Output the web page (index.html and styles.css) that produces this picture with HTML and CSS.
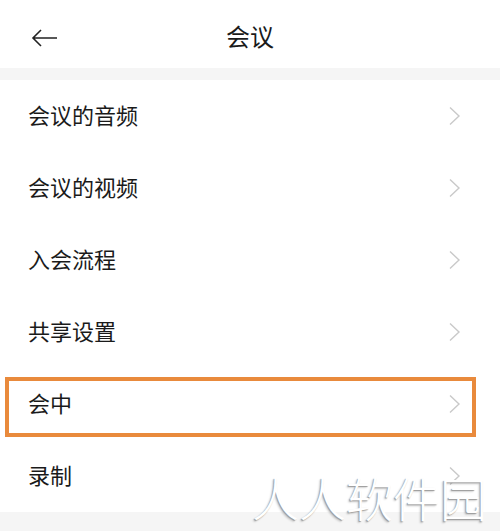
FILE: index.html
```html
<!DOCTYPE html>
<html lang="zh">
<head>
<meta charset="utf-8">
<link rel="stylesheet" href="styles.css">
</head>
<body>
<div class="page">
  <header class="topbar">
    <svg class="back" width="28" height="18" viewBox="0 0 28 18"><path d="M26 9H2M10 1L2 9l8 8" fill="none" stroke="#222" stroke-width="1.6"/></svg>
    <h1 class="title">会议</h1>
  </header>
  <div class="band"></div>
  <ul class="list">
    <li class="row"><span>会议的音频</span><svg class="chev" width="14" height="20" viewBox="0 0 14 20"><path d="M2 1.5l9 8.5-9 8.5" fill="none" stroke="#c9c9c9" stroke-width="1.4"/></svg></li>
    <li class="row"><span>会议的视频</span><svg class="chev" width="14" height="20" viewBox="0 0 14 20"><path d="M2 1.5l9 8.5-9 8.5" fill="none" stroke="#c9c9c9" stroke-width="1.4"/></svg></li>
    <li class="row"><span>入会流程</span><svg class="chev" width="14" height="20" viewBox="0 0 14 20"><path d="M2 1.5l9 8.5-9 8.5" fill="none" stroke="#c9c9c9" stroke-width="1.4"/></svg></li>
    <li class="row"><span>共享设置</span><svg class="chev" width="14" height="20" viewBox="0 0 14 20"><path d="M2 1.5l9 8.5-9 8.5" fill="none" stroke="#c9c9c9" stroke-width="1.4"/></svg></li>
    <li class="row hl"><span>会中</span><svg class="chev" width="14" height="20" viewBox="0 0 14 20"><path d="M2 1.5l9 8.5-9 8.5" fill="none" stroke="#c9c9c9" stroke-width="1.4"/></svg><div class="box"></div></li>
    <li class="row"><span>录制</span><svg class="chev" width="14" height="20" viewBox="0 0 14 20"><path d="M2 1.5l9 8.5-9 8.5" fill="none" stroke="#c9c9c9" stroke-width="1.4"/></svg></li>
  </ul>
  <div class="foot"></div>
  <div class="wm">人人软件园</div>
</div>
</body>
</html>
```
FILE: styles.css
```css
html, body {
  margin: 0;
  padding: 0;
  background: #fff;
}
.page {
  position: relative;
  width: 500px;
  height: 531px;
  overflow: hidden;
  font-family: "Noto Sans CJK SC", "Noto Sans", sans-serif;
  color: #1a1a1a;
}
.topbar {
  position: relative;
  height: 68px;
  display: flex;
  align-items: center;
  justify-content: center;
}
.back {
  position: absolute;
  left: 31px;
  top: 29px;
}
.title {
  margin: 0;
  font-size: 24px;
  font-weight: 400;
  line-height: 1;
  padding-top: 3px;
}
.band {
  height: 12px;
  background: #f5f5f5;
}
.list {
  list-style: none;
  margin: 0;
  padding: 0;
}
.row {
  position: relative;
  height: 72px;
  display: flex;
  align-items: center;
  justify-content: space-between;
  padding: 0 38px 0 28px;
  font-size: 22px;
  line-height: 1;
}
.row span {
  padding-bottom: 5px;
}
.chev {
  display: block;
}
.box {
  position: absolute;
  left: 5px;
  right: 24px;
  top: 9px;
  bottom: 3px;
  border: 4px solid #e98a3c;
}
.foot {
  height: 19px;
  background: #f5f5f5;
}
.wm {
  position: absolute;
  left: 252px;
  top: 473px;
  font-size: 47px;
  line-height: 1;
  color: #fff;
  font-family: "Noto Sans CJK SC", sans-serif;
  font-weight: 300;
  text-shadow: -1px 1px 1px #9a9a9a, -2px 2px 2px rgba(0,0,0,0.15);
}
```
